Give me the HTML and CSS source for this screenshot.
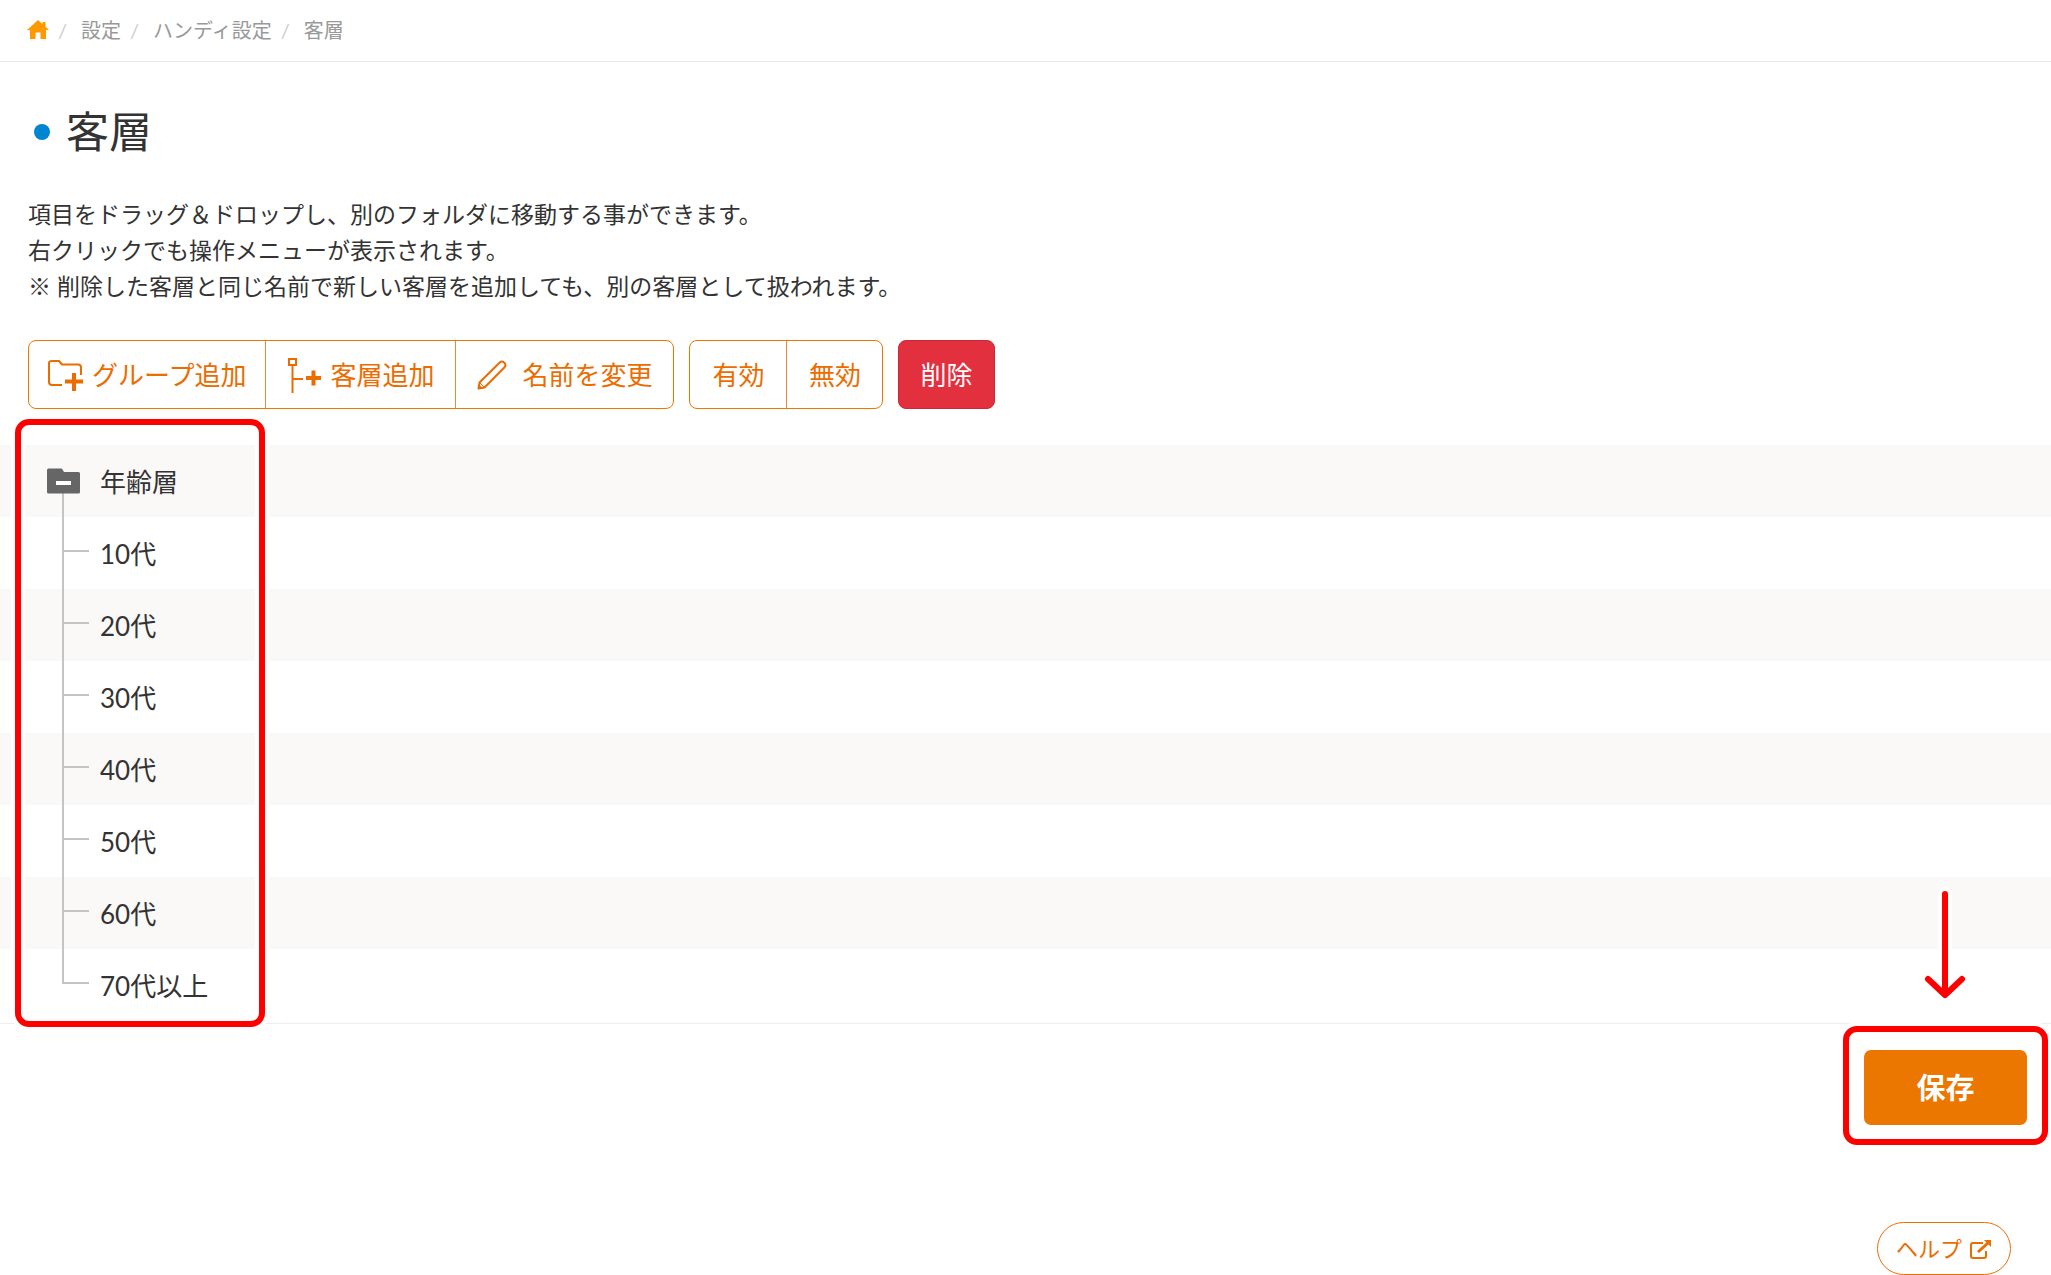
FILE: index.html
```html
<!DOCTYPE html>
<html lang="ja">
<head>
  <meta charset="UTF-8" />
  <meta name="viewport" content="width=device-width, initial-scale=1.0" />
  <title>客層</title>
  <link rel="stylesheet" href="styles.css">
</head>
<body>
  <nav class="breadcrumb">
    <a href="#" class="home" aria-label="ホーム">
      <svg width="22" height="19" viewBox="0 0 22 19"><path d="M11 0 0 10h3v9h5.500v-6.500h5V19H19v-9h3l-3.500-3.200V2h-3v2.100z"/></svg>
    </a>
    <span class="sep">/</span>
    <a href="#">設定</a>
    <span class="sep">/</span>
    <a href="#">ハンディ設定</a>
    <span class="sep">/</span>
    <a href="#">客層</a>
  </nav>

  <main>
    <h1>客層</h1>

    <p class="description">
      項目をドラッグ＆ドロップし、別のフォルダに移動する事ができます。<br>
      右クリックでも操作メニューが表示されます。<br>
      ※ 削除した客層と同じ名前で新しい客層を追加しても、別の客層として扱われます。
    </p>

    <div class="toolbar">
      <div class="btn-group">
        <button type="button" class="add-group">
          <svg width="36" height="32" viewBox="0 0 36 32" fill="none" stroke="currentColor">
            <path stroke-width="2" d="M14 26H4q-3 0-3-3V4q0-2 3-2h7l3 3.500h16q3 0 3 3V16"/>
            <path stroke-width="4" d="M17 22.500h18M26 14v18"/>
          </svg>
          グループ追加
        </button>
        <button type="button">
          <svg width="34" height="36" viewBox="0 0 34 36" fill="none" stroke="currentColor">
            <path stroke-width="2" d="M2 2h7v6H2zM5.500 8v28M5.500 22H16"/>
            <path stroke-width="4" d="M19 21h15M26.500 13.500v15"/>
          </svg>
          客層追加
        </button>
        <button type="button" class="rename">
          <svg width="30" height="30" viewBox="0 0 30 30" fill="none" stroke="currentColor" stroke-width="2" stroke-linejoin="round">
            <path d="M1.500 28.500 2.500 22.500 23 2.200q2-1.500 4.300.500 2 2.300.500 4.300L7.500 27.500z"/>
            <path stroke-width="1" d="M2.500 22.500l5 5"/>
            <path fill="currentColor" stroke="none" d="M1 29l1-4.500 3.500 3.500z"/>
          </svg>
          名前を変更
        </button>
      </div>
      <div class="btn-group">
        <button type="button">有効</button>
        <button type="button">無効</button>
      </div>
      <button type="button" class="btn-delete">削除</button>
    </div>
  </main>

  <section class="tree">
    <ul>
      <li>
        <svg class="folder" width="33" height="72" viewBox="0 0 33 72">
          <path fill="#c4c4c4" d="M15 48h2v24h-2z"/>
          <path fill="#666" d="M1.500 23.500H14q1 0 1.500 1l1.500 2.500h14.500q1.500 0 1.500 1.500V47q0 1.500-1.500 1.500h-30Q0 48.500 0 47V25q0-1.500 1.500-1.500z"/>
          <path fill="#fff" d="M9 36h15v4H9z"/>
        </svg>
        <span>年齢層</span>
      </li>
      <li><i class="branch"></i><span>10代</span></li>
      <li><i class="branch"></i><span>20代</span></li>
      <li><i class="branch"></i><span>30代</span></li>
      <li><i class="branch"></i><span>40代</span></li>
      <li><i class="branch"></i><span>50代</span></li>
      <li><i class="branch"></i><span>60代</span></li>
      <li><i class="branch"></i><span>70代以上</span></li>
    </ul>
    <div class="marker"></div>
  </section>

  <div class="actions">
    <div class="save-wrap">
      <button type="submit" class="btn-save">保存</button>
      <div class="marker"></div>
      <svg class="arrow" width="48" height="120" viewBox="0 0 48 120" fill="none" stroke-linecap="round" stroke-linejoin="round">
        <path stroke="#fff" stroke-width="14" d="M24 9v100"/>
        <path stroke="#f00" stroke-width="6" d="M24 9v100M7 94l17 16 17-16"/>
      </svg>
    </div>
  </div>

  <footer>
    <a href="#" class="help">
      <span>ヘルプ</span>
      <svg width="22" height="20" viewBox="0 0 22 20" fill="none" stroke="currentColor">
        <path stroke-width="2" d="M13 4H3q-2 0-2 2v11q0 2 2 2h11q2 0 2-2v-5"/>
        <path stroke-width="3" d="M8 13 18 4"/>
        <path fill="currentColor" stroke="none" d="M14 1h7v7z"/>
      </svg>
    </a>
  </footer>
</body>
</html>
```
FILE: styles.css
```css
* {
  box-sizing: border-box;
}

body {
  margin: 0;
  font-family: Lato, "Noto Sans CJK JP", sans-serif;
  font-size: 26px;
  color: #333;
  background: #fff;
}

a {
  color: inherit;
  text-decoration: none;
}

svg {
  display: block;
  flex: none;
}

.breadcrumb {
  display: flex;
  align-items: center;
  height: 62px;
  padding: 0 27px 2px;
  border-bottom: 1px solid #e8e8e8;
  font-size: 20px;
  line-height: 28px;
  color: #999;
}

.breadcrumb .home svg {
  fill: #f90;
}

.breadcrumb .sep {
  margin: 0 14px 0 9px;
  color: #ccc;
}

main {
  padding: 0 28px;
}

h1 {
  display: flex;
  align-items: center;
  gap: 16px;
  margin: 40px 0 34px;
  padding-left: 6px;
  font-size: 43px;
  font-weight: 400;
  line-height: 60px;
}

h1::before {
  content: "";
  width: 16px;
  height: 16px;
  border-radius: 50%;
  background: #0285d0;
}

.description {
  margin: 0 0 36px;
  font-size: 23px;
  line-height: 36px;
}

.toolbar {
  display: flex;
  gap: 15px;
}

button {
  font: inherit;
  cursor: pointer;
}

.btn-group {
  display: flex;
  border: 1px solid #ee7700;
  border-radius: 8px;
}

.btn-group button,
.btn-delete {
  display: flex;
  align-items: center;
  justify-content: center;
  gap: 9px;
  min-width: 96px;
  height: 67px;
  padding: 0 21px 2px;
  border: 0;
  background: none;
  color: #ec6c00;
}

.btn-group button + button {
  border-left: 1px solid #f08a30;
}

.btn-group svg {
  margin-top: 3px;
}

.btn-group .add-group {
  gap: 8px;
  padding: 0 19px 2px;
}

.btn-group .rename {
  gap: 15px;
}

.btn-delete {
  height: 69px;
  border: 1px solid #c92a3a;
  border-radius: 8px;
  background: #e2303f;
  color: #fff;
}

.tree {
  position: relative;
  margin-top: 36px;
  border-bottom: 1px solid #eee;
}

.tree ul {
  margin: 0;
  padding: 0 0 2px;
  list-style: none;
}

.tree li {
  display: flex;
  align-items: center;
  height: 72px;
  padding-left: 47px;
}

.tree li:nth-child(odd) {
  background: #faf9f8;
}

.tree span {
  padding-bottom: 2px;
}

.folder {
  margin-right: 20px;
}

.branch {
  width: 27px;
  height: 72px;
  margin: 0 11px 0 15px;
  background:
    linear-gradient(#c4c4c4, #c4c4c4) 0 0 / 2px 100% no-repeat,
    linear-gradient(#c4c4c4, #c4c4c4) 0 33px / 100% 2px no-repeat;
}

.tree li:last-child .branch {
  background-size: 2px 35px, 100% 2px;
}

/* red callout frames */
.marker {
  position: absolute;
  border: 6px solid #f00;
  border-radius: 14px;
  box-shadow: 0 0 0 4px #fff, inset 0 0 0 4px #fff;
  pointer-events: none;
}

.tree .marker {
  top: -26px;
  bottom: -4px;
  left: 15px;
  width: 250px;
}

.actions {
  display: flex;
  justify-content: flex-end;
  padding: 26px 24px 0;
}

.save-wrap {
  position: relative;
}

.save-wrap .marker {
  inset: -24px -21px -20px;
}

.btn-save {
  display: block;
  width: 163px;
  height: 75px;
  padding: 0 0 4px;
  border: 0;
  border-radius: 7px;
  background: #eb7600;
  color: #fff;
  font-size: 29px;
  font-weight: 700;
}

.arrow {
  position: absolute;
  bottom: 120px;
  left: 57px;
}

footer {
  display: flex;
  justify-content: flex-end;
  padding: 97px 40px 0;
}

.help {
  display: flex;
  align-items: center;
  gap: 8px;
  height: 53px;
  padding: 0 18px;
  border: 1px solid #ec6c00;
  border-radius: 27px;
  color: #ec6c00;
  font-size: 22px;
}

.help span {
  padding-bottom: 4px;
}
```
